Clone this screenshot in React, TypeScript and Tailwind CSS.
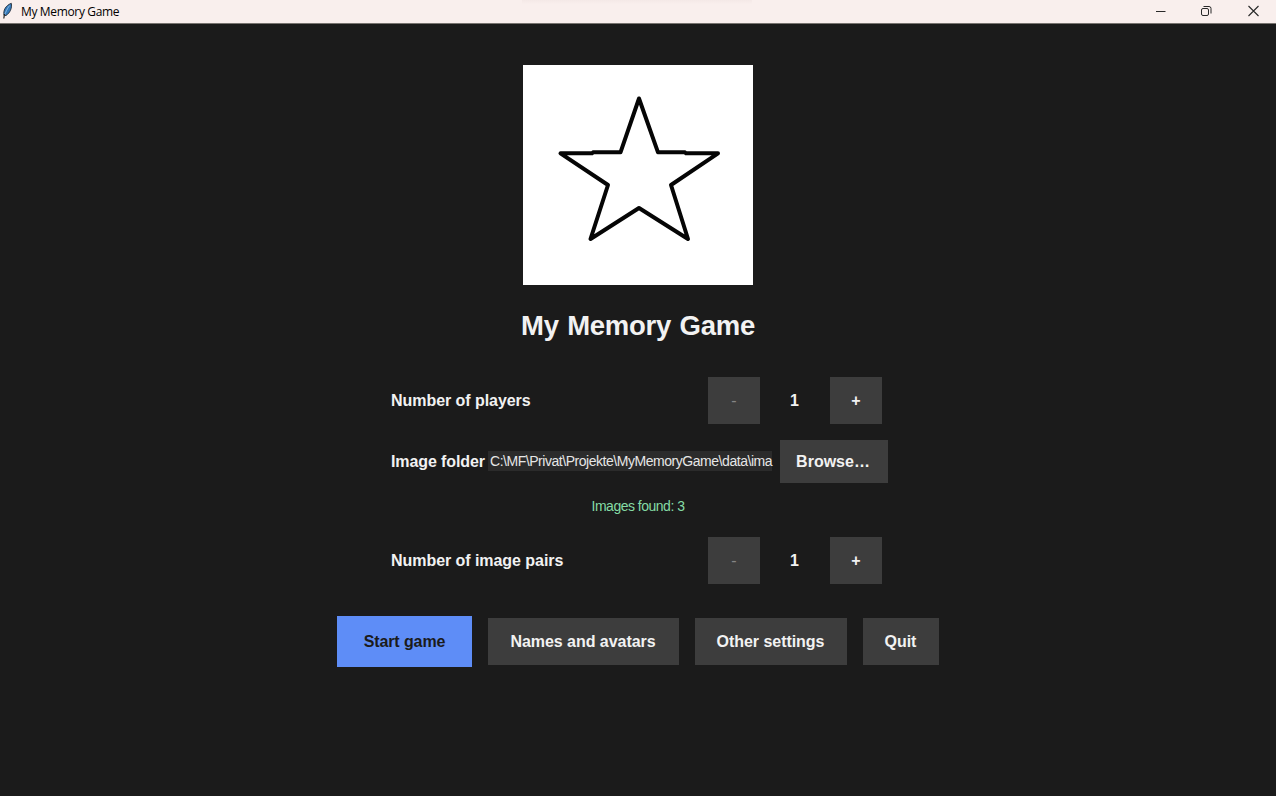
import { ReactNode } from "react";

function Stepper({ label }: { label: string }) {
  return (
    <div className="ml-[391px] flex h-[47px] w-[491px] items-center">
      <span className="grow whitespace-nowrap tracking-[-0.05px]">{label}</span>
      <button className="h-[47px] w-[52px] bg-[#3d3d3d] font-normal text-[#858585]">-</button>
      <span className="w-[70px] pr-px text-center">1</span>
      <button className="h-[47px] w-[52px] bg-[#3d3d3d]">+</button>
    </div>
  );
}

function Action({ className, children }: { className: string; children: ReactNode }) {
  return (
    <button className={`h-[47px] shrink-0 whitespace-nowrap bg-[#3d3d3d] tracking-[-0.04px] ${className}`}>
      {children}
    </button>
  );
}

function TitleBar() {
  return (
    <header className="relative flex h-6 items-start border-b border-[#77736f] bg-[#f9efed] font-['Open_Sans',sans-serif] text-black">
      <div className="absolute left-[522px] top-0 h-1 w-[230px] bg-gradient-to-b from-[#f4e9e7] to-[#f9efed]" />
      <svg className="ml-[2px] mt-[2px] h-[18px] w-[11px] shrink-0" viewBox="0 0 11 18">
        <path d="M2 13.5C1 8.5 3.5 3.5 9.3 1.3C10.3 6 8 11 4 13.5Z" fill="#347abb" stroke="#252e38" strokeWidth="0.9" />
        <path d="M7.5 3.5C5 7 3.5 10.5 2.2 14" fill="none" stroke="#9cc4e4" strokeWidth="0.8" />
        <path d="M2.5 12L1.8 16.5" stroke="#202020" strokeWidth="1.2" />
      </svg>
      <span className="ml-2 mt-[2px] grow text-[12px] leading-5 tracking-[-0.35px]">My Memory Game</span>
      <svg className="h-[22px] w-[120px]" viewBox="0 0 120 22" fill="none" stroke="#292929">
        <path d="M-0.5 11.5H9.5" />
        <rect x="45.5" y="8.5" width="7" height="7" rx="1.5" />
        <path d="M47.5 6.5H53A2 2 0 0 1 55 8.5V13.5" />
        <path d="M92.5 6L102.5 16M102.5 6L92.5 16" strokeWidth="1.1" />
      </svg>
    </header>
  );
}

export default function App() {
  return (
    <div className="h-[796px] w-[1276px] overflow-hidden bg-[#1b1b1b] font-['Liberation_Sans',sans-serif] text-base font-bold text-[#f2f2f2]">
      <div className="font-normal">
        <TitleBar />
      </div>
      <main className="flex flex-col pt-[41px]">
        <svg className="ml-[523px] h-[220px] w-[230px] bg-white" viewBox="523 65 230 220">
          <path
            d="M639 98.5L658 152.3L685 152.3L686 153.3L718 153.3L671 185L688 239L639 208L590.5 239L608 185L560.5 153.3L592 153.3L593 152.3L620.5 152.3Z"
            fill="none"
            stroke="#050505"
            strokeWidth="4"
            strokeLinejoin="round"
          />
        </svg>
        <h1 className="mt-[23px] text-center text-[27.5px] leading-9 tracking-[-0.25px] [word-spacing:1px]">My Memory Game</h1>
        <div className="mt-[33px]">
          <Stepper label="Number of players" />
        </div>
        <div className="ml-[391px] mt-4 flex h-[43px] items-center">
          <span className="w-[97px] whitespace-nowrap tracking-[-0.1px]">Image folder</span>
          <div className="mb-px h-5 w-[284px] whitespace-nowrap bg-[#2b2b2b] pl-[2px] text-[14px] font-normal leading-[21px] tracking-[-0.46px] text-[#e6e6e6]">
            C:\MF\Privat\Projekte\MyMemoryGame\data\ima
          </div>
          <button className="ml-2 h-[43px] w-[108px] bg-[#3d3d3d] pr-[2px]">Browse…</button>
        </div>
        <p className="mt-[13px] text-center text-[14px] font-normal leading-5 tracking-[-0.5px] text-[#85dba5]">Images found: 3</p>
        <div className="mt-[21px]">
          <Stepper label="Number of image pairs" />
        </div>
        <div className="ml-[337px] mt-8 flex h-[51px] items-center gap-4">
          <button className="h-[51px] w-[135px] bg-[#5e8df7] tracking-[-0.1px] text-[#1b1b1b]">Start game</button>
          <Action className="w-[191px] pr-px">Names and avatars</Action>
          <Action className="w-[152px] pr-px">Other settings</Action>
          <Action className="w-[76px] pr-px">Quit</Action>
        </div>
      </main>
    </div>
  );
}
